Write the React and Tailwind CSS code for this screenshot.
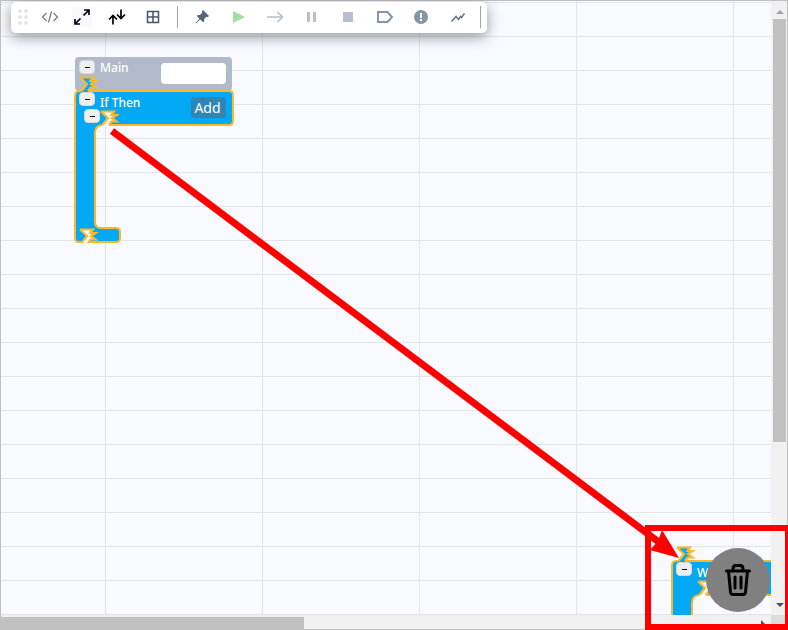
import { useState } from 'react'

const PLUG_EDGE = 'M0 0.500H13L10.500 4H15.500L11 7L15.500 10.500H10.500L8 14M0 0.500L7 7L1.500 14'
const PLUG_FILL = 'M0 0H13L10.500 4H15.500L11 7L15.500 10.500H10.500L8 15H1L7 7Z'

function Plug({ x, y, fill }) {
  return (
    <g transform={`translate(${x} ${y})`}>
      <path d={PLUG_FILL} fill={fill} />
      <path d={PLUG_EDGE} fill="none" stroke="#fdb827" strokeWidth="2.200" />
    </g>
  )
}

function Tool({ label, className = 'flex-1', children }) {
  return (
    <button type="button" aria-label={label} title={label} className={`flex h-6 items-center justify-center ${className}`}>
      {children}
    </button>
  )
}

function Icon({ children, ...props }) {
  return (
    <svg width="18" height="18" viewBox="0 0 18 18" fill="none" stroke="currentColor" strokeWidth="1.5" {...props}>
      {children}
    </svg>
  )
}

function Toolbar() {
  return (
    <div className="absolute top-0.5 left-[11px] z-10 flex h-[31px] w-[476px] items-center rounded-[5px] bg-white pr-1.5 pb-0.5 pl-0.5 shadow-[0_4px_14px_rgba(0,0,0,0.4)]">
      <Tool label="Move toolbar" className="w-5 cursor-move text-[#e2e8f0]">
        <Icon fill="currentColor" stroke="none">
          {[3, 9, 15].map((y) => (
            <g key={y}>
              <circle cx="6" cy={y} r="2" />
              <circle cx="12" cy={y} r="2" />
            </g>
          ))}
        </Icon>
      </Tool>
      <Tool label="Code" className="w-[34px] text-[#718096]">
        <Icon strokeWidth="1.3">
          <path d="M5.500 5L1.500 9L5.500 13M12.500 5L16.500 9L12.500 13M10.500 3.500L7.500 14.500" />
        </Icon>
      </Tool>
      <Tool label="Expand" className="w-[30px] text-black">
        <span className="flex h-5 w-5 items-center justify-center bg-[#f7f9ff]">
          <Icon strokeWidth="1.700">
            <path d="M11 2H16V7M16 2L10.500 7.500M7 16H2V11M2 16L7.500 10.500" />
          </Icon>
        </span>
      </Tool>
      <Tool label="Auto arrange" className="w-10 text-black">
        <Icon strokeWidth="1.700">
          <path d="M5 16.500V7M1 11.500L5 7.500L9 11.500M13 1.500V10M9 6.500L13 10.500L17 6.500" />
        </Icon>
      </Tool>
      <Tool label="Grid" className="w-8 text-[#4a5568]">
        <Icon>
          <path d="M3.500 3.500H14.500V14.500H3.500ZM9 3.500V14.500M3.500 9H14.500" />
        </Icon>
      </Tool>
      <div className="ml-2 h-[22px] w-px bg-[#a0a4aa]" />
      <div className="mr-1 ml-1.5 flex flex-1 items-center">
        <Tool label="Pin" className="flex-1 text-[#56657a]">
          <Icon fill="currentColor" stroke="none">
            <path d="M10 2L16 8L14.500 9.200L13.500 8.700L11.200 11C11.500 12.500 11 13.500 10.200 14.300L7.200 11.500L3 15.500L2.500 15L6.500 10.800L3.500 7.800C4.500 7 5.500 6.700 7 7L9.300 4.600L8.800 3.400Z" />
          </Icon>
        </Tool>
        <Tool label="Run" className="flex-1 text-[#a3dea6]">
          <Icon fill="currentColor" stroke="none"><path d="M3 3L15 9L3 15Z" /></Icon>
        </Tool>
        <Tool label="Step" className="flex-1 text-[#b6bfcb]">
          <Icon><path d="M1 9H16.500M11.500 4L16.500 9L11.500 14" /></Icon>
        </Tool>
        <Tool label="Pause" className="flex-1 text-[#b6bfcb]">
          <Icon fill="currentColor" stroke="none"><path d="M4 4H7V14H4ZM10 4H13V14H10Z" /></Icon>
        </Tool>
        <Tool label="Stop" className="flex-1 text-[#b6bfcb]">
          <Icon fill="currentColor" stroke="none"><path d="M4 4H14V14H4Z" /></Icon>
        </Tool>
        <Tool label="Breakpoint" className="flex-1 text-[#8795a9]">
          <Icon strokeWidth="2"><path d="M2 4H11.500L16 9L11.500 14H2Z" /></Icon>
        </Tool>
        <Tool label="Errors" className="flex-1 text-[#8795a9]">
          <Icon stroke="none">
            <circle cx="9" cy="9" r="7" fill="currentColor" />
            <path d="M8 5H10V10H8ZM8 11H10V13H8Z" fill="white" />
          </Icon>
        </Tool>
        <Tool label="Timeline" className="flex-1 text-[#64748b]">
          <Icon><path d="M2.500 13.500L7 8.500L9.500 11.500L11.500 8.500L12.500 9.500L15.500 5.500" /></Icon>
        </Tool>
      </div>
      <div className="h-[22px] w-px bg-[#a0a4aa]" />
    </div>
  )
}

function Collapse({ className = '' }) {
  return (
    <button
      type="button"
      aria-label="Collapse"
      className={`flex h-3.5 w-4 shrink-0 items-center justify-center rounded-[4px] border border-[#d8d8d8] bg-[#efefef] ${className}`}
    >
      <span className="h-px w-[5px] bg-black" />
    </button>
  )
}

function StatementBlock({ title, className, nested, children }) {
  return (
    <div className={`absolute h-[168px] w-[160px] ${className}`}>
      <svg className="absolute inset-0" width="160" height="168" viewBox="0 0 160 168">
        <path
          d="M1 20Q1 15 5 15H155Q159 15 159 19V45Q159 49 155 49H28Q21 50 21 57V146Q21 152 27 152H42Q46 152 46 156V162Q46 166 42 166H5Q1 166 1 162Z"
          fill="#03a9f4"
          stroke="#fdb827"
          strokeWidth="2"
        />
        <Plug x={6} y={1} fill="#03a9f4" />
        <Plug x={27} y={35} fill="#f8faff" />
        <Plug x={6} y={153} fill="#f8faff" />
      </svg>
      <div className="relative flex items-start pt-4 pr-2 pl-[5px]">
        <Collapse />
        <span className="mt-[3px] ml-[5px] text-xs leading-4 font-medium text-white">{title}</span>
        {children}
      </div>
      {nested && <Collapse className="relative -mt-[9px] ml-2.5" />}
    </div>
  )
}

function Canvas() {
  const [name, setName] = useState('')

  return (
    <main className="relative overflow-hidden bg-[#f8faff]">
      <svg className="absolute inset-0 h-full w-full" aria-hidden="true">
        <defs>
          <pattern id="grid" x="105" y="2" width="157" height="34" patternUnits="userSpaceOnUse">
            <path d="M0 0H157V1H1V34H0Z" fill="#e1e6ec" />
          </pattern>
        </defs>
        <rect width="100%" height="100%" fill="url(#grid)" />
      </svg>

      <div className="absolute top-[57px] left-[75px] flex h-[34px] w-[157px] items-start rounded-[4px] bg-[#b1bacb] pt-[3px] pr-1.5 pl-1">
        <Collapse />
        <label htmlFor="main-name" className="ml-[5px] text-xs leading-4 font-medium text-white">Main</label>
        <input
          id="main-name"
          value={name}
          onChange={(e) => setName(e.target.value)}
          className="mt-[3px] ml-auto h-[21px] w-[65px] rounded-[4px] bg-white px-1 text-xs outline-none"
        />
      </div>

      <StatementBlock title="If Then" className="top-[76px] left-[74px]" nested>
        <button type="button" className="mt-[5px] ml-auto h-[21px] w-[35px] rounded-[4px] bg-[#2d86b5] pr-0.5 text-sm leading-5 text-white">
          Add
        </button>
      </StatementBlock>

      <StatementBlock title="While" className="top-[546px] left-[671px]" />
    </main>
  )
}

function Arrow({ d, className }) {
  return (
    <svg width="8" height="4" viewBox="0 0 8 4" className={className} aria-hidden="true">
      <path d={d} fill="currentColor" />
    </svg>
  )
}

export default function App() {
  return (
    <div className='relative grid h-screen grid-cols-[1fr_17px] grid-rows-[1fr_15px] overflow-hidden font-["Noto_Sans","Open_Sans",sans-serif]'>
      <Canvas />
      <div className="flex flex-col items-center bg-[#f1f1f1] pt-2.5 pb-2">
        <Arrow d="M4 0L8 4H0Z" className="shrink-0 text-[#a3a3a3]" />
        <div className="my-[5px] min-h-0 flex-1">
          <div className="h-[73%] w-[13px] bg-[#c1c1c1]" />
        </div>
        <Arrow d="M0 0H8L4 4Z" className="shrink-0 text-[#505050]" />
      </div>
      <div className="flex items-center bg-[#f1f1f1] pt-0.5">
        <div className="flex h-full flex-1">
          <div className="h-full w-[40%] bg-[#c1c1c1]" />
        </div>
        <svg width="4" height="8" viewBox="0 0 4 8" className="mr-1.5 text-[#505050]" aria-hidden="true">
          <path d="M0 0L4 4L0 8Z" fill="currentColor" />
        </svg>
      </div>
      <div className="bg-[#dcdcdc]" />

      <div className="pointer-events-none absolute inset-0 border border-[#c0c0c0]" />
      <Toolbar />

      <button
        type="button"
        aria-label="Delete"
        className="absolute right-[18px] bottom-[18px] flex h-16 w-16 items-center justify-center rounded-full bg-[#808080] text-black"
      >
        <svg width="28" height="34" viewBox="0 0 28 34" fill="none" stroke="currentColor" strokeWidth="3" strokeLinejoin="round" strokeLinecap="round">
          <path d="M2.500 8H25.500M4.500 8L6.500 29Q6.800 31.500 9 31.500H19Q21.200 31.500 21.500 29L23.500 8M9 8V6Q9 2.500 12 2.500H16Q19 2.500 19 6V8" />
          <path d="M11 14V25M17 14V25" />
        </svg>
      </button>

      <svg className="pointer-events-none absolute top-0 left-0" width="700" height="580" aria-hidden="true">
        <path d="M112 131L660 543" stroke="#ff0000" strokeWidth="7" />
        <path d="M679 558L650 550L658 541L662 530Z" fill="#ff0000" />
      </svg>
      <div className="pointer-events-none absolute right-0 bottom-0 h-[105px] w-[143px] border-6 border-r-[3px] border-[#ff0000]" />
    </div>
  )
}
